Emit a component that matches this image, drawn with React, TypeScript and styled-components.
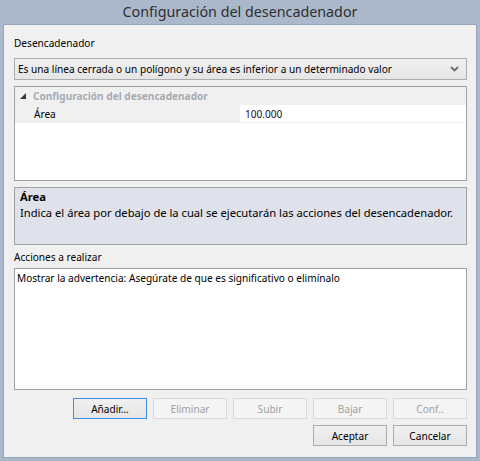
import styled, { createGlobalStyle } from "styled-components";

const GlobalStyle = createGlobalStyle`
  html, body {
    margin: 0;
    padding: 0;
    background: #abb8cb;
  }
  * {
    box-sizing: border-box;
  }
`;

const FONT = `"Noto Sans", "Open Sans", sans-serif`;

const Window = styled.div`
  width: 480px;
  height: 461px;
  display: flex;
  flex-direction: column;
  background: #abb8cb;
  padding: 0 3px 3px 3px;
  font-family: ${FONT};
  font-size: 10.1px;
  color: #000;
`;

const TitleBar = styled.div`
  height: 24px;
  display: flex;
  align-items: center;
  justify-content: center;
  font-size: 14.3px;
  color: #2f2f2f;
  padding-bottom: 1px;
`;

const Client = styled.div`
  flex: 1;
  display: flex;
  flex-direction: column;
  background: #f0f0f0;
  border: 1px solid #97a6ba;
  padding: 11px 9px 0 10px;
`;

const Label = styled.div<{ $gap?: number }>`
  height: 14px;
  line-height: 14px;
  margin-top: ${(p) => p.$gap ?? 0}px;
  white-space: nowrap;
`;

const Combo = styled.div`
  height: 22px;
  margin-top: 8px;
  display: flex;
  align-items: center;
  justify-content: space-between;
  padding: 0 7px 0 3px;
  border: 1px solid #acacac;
  background: linear-gradient(#f0f0f0, #e5e5e5);
  white-space: nowrap;
`;

const Grid = styled.div`
  height: 95px;
  margin-top: 6px;
  border: 1px solid #a0a0a0;
  background: #fff;
  display: flex;
  flex-direction: column;
`;

const GridRow = styled.div`
  height: 18px;
  display: flex;
  align-items: stretch;
  background: #f0f0f0;
  border-bottom: 1px solid #f0f0f0;
`;

const Gutter = styled.div`
  width: 16px;
  display: flex;
  align-items: center;
  justify-content: center;
`;

const CategoryName = styled.div`
  flex: 1;
  display: flex;
  align-items: center;
  padding-left: 2px;
  font-weight: 700;
  color: #a7abb3;
`;

const PropName = styled.div`
  width: 209px;
  display: flex;
  align-items: center;
  padding-left: 3px;
`;

const PropValue = styled.div`
  flex: 1;
  display: flex;
  align-items: center;
  padding-left: 5px;
  background: #fff;
  color: #1a0d2e;
`;

const Description = styled.div`
  height: 58px;
  margin-top: 6px;
  border: 1px solid #a0a0a0;
  background: #dfe2ea;
  padding: 1px 5px;
  font-size: 11.2px;
  line-height: 16px;
`;

const DescTitle = styled.div`
  font-weight: 700;
`;

const ListBox = styled.div`
  height: 122px;
  margin-top: 4px;
  border: 1px solid #a0a0a0;
  background: #fff;
  padding: 2px 2px;
  line-height: 15px;
`;

const ButtonRow = styled.div<{ $gap: number }>`
  display: flex;
  justify-content: flex-end;
  gap: 6px;
  margin-top: ${(p) => p.$gap}px;
`;

const Button = styled.div<{ $disabled?: boolean; $focused?: boolean }>`
  width: 74px;
  height: 21px;
  display: flex;
  align-items: center;
  justify-content: center;
  border: 1px solid
    ${(p) => (p.$focused ? "#3c8fe6" : p.$disabled ? "#d9d9d9" : "#acacac")};
  background: ${(p) =>
    p.$disabled ? "#f4f4f4" : "linear-gradient(#f0f0f0, #e5e5e5)"};
  color: ${(p) => (p.$disabled ? "#a0a0a0" : "#000")};
`;

// small filled arrow shown next to an expanded category
const ExpandedGlyph = () => (
  <svg width="6" height="6" viewBox="0 0 6 6">
    <polygon points="6,0 6,6 0,6" fill="#3a3a3a" />
  </svg>
);

const Chevron = () => (
  <svg width="9" height="6" viewBox="0 0 9 6">
    <polyline
      points="1,1 4.5,4.5 8,1"
      fill="none"
      stroke="#6d6d6d"
      strokeWidth="1.8"
    />
  </svg>
);

export default function App() {
  return (
    <>
      <GlobalStyle />
      <Window>
        <TitleBar>Configuración del desencadenador</TitleBar>
        <Client>
          <Label>Desencadenador</Label>
          <Combo>
            <span>
              Es una línea cerrada o un polígono y su área es inferior a un
              determinado valor
            </span>
            <Chevron />
          </Combo>
          <Grid>
            <GridRow>
              <Gutter>
                <ExpandedGlyph />
              </Gutter>
              <CategoryName>Configuración del desencadenador</CategoryName>
            </GridRow>
            <GridRow>
              <Gutter />
              <PropName>Área</PropName>
              <PropValue>100.000</PropValue>
            </GridRow>
          </Grid>
          <Description>
            <DescTitle>Área</DescTitle>
            <div>
              Indica el área por debajo de la cual se ejecutarán las acciones
              del desencadenador.
            </div>
          </Description>
          <Label $gap={5}>Acciones a realizar</Label>
          <ListBox>
            Mostrar la advertencia: Asegúrate de que es significativo o
            elimínalo
          </ListBox>
          <ButtonRow $gap={8}>
            <Button $focused>Añadir…</Button>
            <Button $disabled>Eliminar</Button>
            <Button $disabled>Subir</Button>
            <Button $disabled>Bajar</Button>
            <Button $disabled>Conf..</Button>
          </ButtonRow>
          <ButtonRow $gap={6}>
            <Button>Aceptar</Button>
            <Button>Cancelar</Button>
          </ButtonRow>
        </Client>
      </Window>
    </>
  );
}
